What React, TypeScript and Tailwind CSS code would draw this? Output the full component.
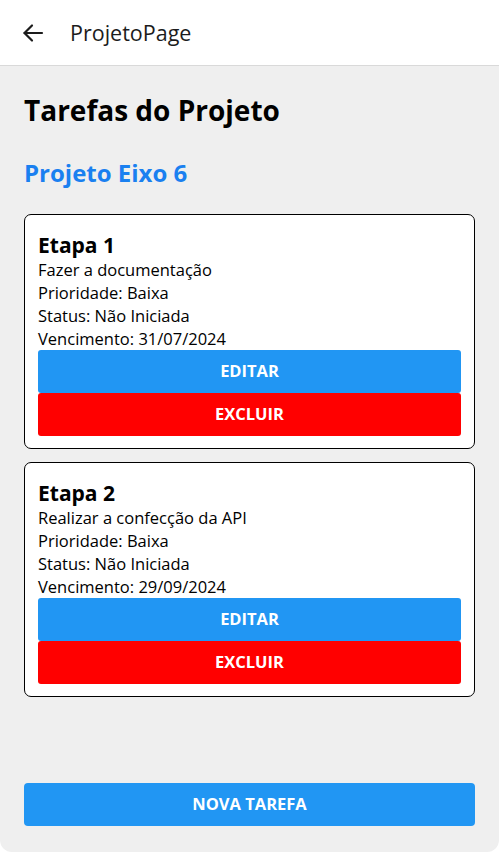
import React from "react";

const tasks = [
  { title: "Etapa 1", desc: "Fazer a documentação", prio: "Baixa", status: "Não Iniciada", due: "31/07/2024" },
  { title: "Etapa 2", desc: "Realizar a confecção da API", prio: "Baixa", status: "Não Iniciada", due: "29/09/2024" },
];

export default function App() {
  return (
    <div className="w-[499px] h-[852px] bg-white flex flex-col text-black" style={{ fontFamily: '"Open Sans", sans-serif' }}>
      <header className="h-[66px] shrink-0 flex items-center border-b border-[#d9d9d9] bg-white">
        <svg className="ml-[21px]" width="24" height="24" viewBox="0 0 24 24" fill="none" stroke="#1c1c1c" strokeWidth="2.2" strokeLinecap="round" strokeLinejoin="round">
          <path d="M21 12H3.5" />
          <path d="M11 4.5 3.5 12l7.5 7.5" />
        </svg>
        <span className="ml-[25px] text-[21.5px] text-[#1c1c1c] leading-none">ProjetoPage</span>
      </header>
      <main className="flex-1 bg-[#efefef] rounded-b-[12px] flex flex-col px-[24px] pt-[26px] pb-[26px]">
        <h1 className="text-[28px] font-bold leading-[36px]">Tarefas do Projeto</h1>
        <h2 className="mt-[30px] text-[24px] font-bold text-[#1a80f0] leading-[30px]">Projeto Eixo 6</h2>
        <div className="mt-[26px] flex flex-col gap-[13px]">
          {tasks.map((t) => (
            <div key={t.title} className="bg-white border border-black rounded-[7px] px-[13px] pt-[17px] pb-[12px]">
              <div className="text-[21px] font-bold leading-[26px]">{t.title}</div>
              <div className="text-[16.5px] leading-[23px]">{t.desc}</div>
              <div className="text-[16.5px] leading-[23px]">Prioridade: {t.prio}</div>
              <div className="text-[16.5px] leading-[23px]">Status: {t.status}</div>
              <div className="text-[16.5px] leading-[23px]">Vencimento: {t.due}</div>
              <button className="w-full h-[43px] bg-[#2196f3] text-white font-bold text-[16.5px] rounded-[3px]">EDITAR</button>
              <button className="w-full h-[43px] bg-[#ff0000] text-white font-bold text-[16.5px] rounded-[3px]">EXCLUIR</button>
            </div>
          ))}
        </div>
        <div className="flex-1" />
        <button className="w-full h-[43px] bg-[#2196f3] text-white font-bold text-[16.5px] rounded-[4px]">NOVA TAREFA</button>
      </main>
    </div>
  );
}
